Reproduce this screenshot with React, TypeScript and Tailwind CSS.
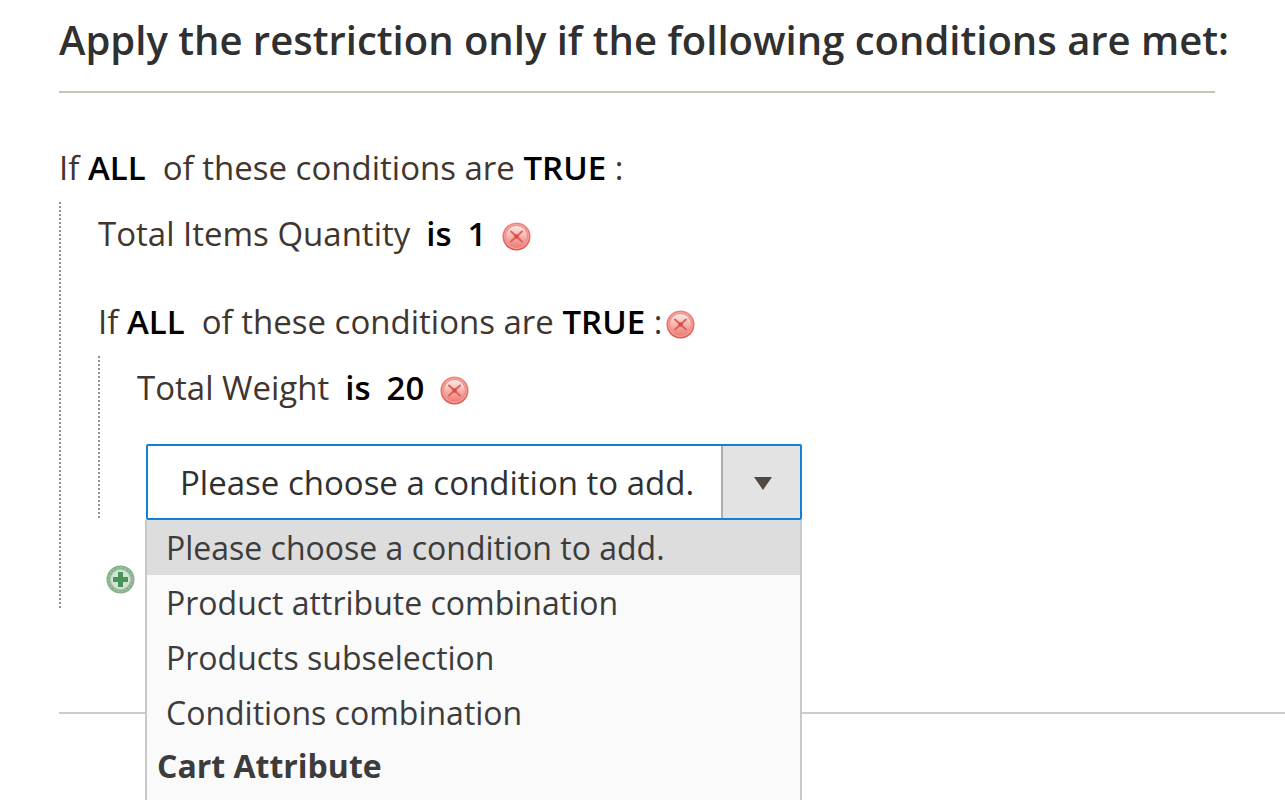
import { useState } from "react";
import type { ReactNode } from "react";

const choices = [
  "Please choose a condition to add.",
  "Product attribute combination",
  "Products subselection",
  "Conditions combination",
];

function RemoveIcon() {
  return (
    <svg viewBox="0 0 29 29" className="size-[29px]" aria-hidden="true">
      <defs>
        <linearGradient id="remove-fill" x1="0" y1="0" x2="0" y2="1">
          <stop offset="0" stopColor="#fdeeea" />
          <stop offset="0.5" stopColor="#f5b5b0" />
          <stop offset="1" stopColor="#ee7b74" />
        </linearGradient>
        <linearGradient id="remove-ring" x1="0" y1="0" x2="0" y2="1">
          <stop offset="0" stopColor="#f08a84" />
          <stop offset="1" stopColor="#e5524c" />
        </linearGradient>
      </defs>
      <circle cx="14.5" cy="14.5" r="14" fill="url(#remove-ring)" />
      <circle cx="14.5" cy="14.5" r="12.4" fill="#f4a7a2" />
      <circle cx="14.5" cy="14.5" r="11" fill="url(#remove-fill)" stroke="#ee8680" strokeWidth="1" />
      <path d="M9 9.500l11 10M20 9.500l-11 10" stroke="#e4605a" strokeWidth="2" strokeLinecap="round" />
      <circle cx="14.5" cy="14.5" r="2.2" fill="#df4b45" />
    </svg>
  );
}

function AddIcon() {
  return (
    <svg viewBox="0 0 29 29" className="size-[29px]" aria-hidden="true">
      <circle cx="14.5" cy="14.5" r="14" fill="#86b18a" />
      <circle cx="14.5" cy="14.5" r="12" fill="none" stroke="#a4c5a6" strokeWidth="1.500" strokeDasharray="2 2" />
      <circle cx="14.5" cy="14.5" r="10" fill="#d5e2d4" stroke="#b4cfb5" strokeWidth="1" />
      <path d="M12 7h5v5h5v5h-5v5h-5v-5H7v-5h5z" fill="#479659" />
    </svg>
  );
}

function IconButton({ label, children }: { label: string; children: ReactNode }) {
  return (
    <button type="button" aria-label={label} className="block shrink-0 cursor-pointer">
      {children}
    </button>
  );
}

function Param({ children }: { children: ReactNode }) {
  return (
    <a href="#edit" className="font-semibold text-black">
      {children}
    </a>
  );
}

function Group({ children, className }: { children: ReactNode; className: string }) {
  return (
    <ul
      className={
        "mt-3 bg-[repeating-linear-gradient(to_bottom,#929292_0_2px,transparent_2px_4px)] bg-[length:2px_100%] bg-no-repeat pl-[39px] pt-[10px] " +
        className
      }
    >
      {children}
    </ul>
  );
}

function Combination({ removable = false }: { removable?: boolean }) {
  return (
    <div className="flex items-center gap-1">
      <p className="whitespace-pre">
        If <Param>ALL</Param>
        {"  of these conditions are "}
        <Param>TRUE</Param>
        {" :"}
      </p>
      {removable && (
        <span className="mt-1">
          <IconButton label="Remove combination">
            <RemoveIcon />
          </IconButton>
        </span>
      )}
    </div>
  );
}

function Condition({ name, value }: { name: string; value: string }) {
  return (
    <li className="flex items-center gap-4">
      <span>{name}</span>
      <Param>is</Param>
      <Param>{value}</Param>
      <span className="mt-1">
        <IconButton label={"Remove " + name}>
          <RemoveIcon />
        </IconButton>
      </span>
    </li>
  );
}

function ConditionPicker() {
  const [value, setValue] = useState(choices[0]);
  return (
    <div className="relative ml-[9px] mt-[34px] w-[656px]">
      <div className="relative">
        <select
          aria-label="Condition to add"
          value={value}
          onChange={(e) => setValue(e.target.value)}
          className="block h-[76px] w-full appearance-none rounded-[2px] border-2 border-[#1080d8] bg-white pl-8 pr-24 pt-[2px] text-[#303030] outline-none"
        >
          {choices.map((c) => (
            <option key={c}>{c}</option>
          ))}
        </select>
        <span className="pointer-events-none absolute bottom-[2px] right-[2px] top-[2px] flex w-[79px] items-center justify-center border-l-2 border-[#adadad] bg-[#e3e3e3] pl-[3px] pt-[2px]">
          <svg viewBox="0 0 18 13" className="h-[13px] w-[18px]" aria-hidden="true">
            <path d="M0 0h18L9 13z" fill="#514943" />
          </svg>
        </span>
      </div>
      <div
        role="listbox"
        aria-label="Conditions"
        className="absolute -left-px right-0 top-full h-[300px] border-x-2 border-[#c8c8c8] bg-[#fafafa] text-[32px] text-[#3c3c3c]"
      >
        {choices.map((c) => (
          <button
            key={c}
            type="button"
            role="option"
            aria-selected={c === value}
            onClick={() => setValue(c)}
            className="block h-[55px] w-full pl-[19px] text-left leading-[55px] aria-selected:bg-[#dddddd]"
          >
            {c}
          </button>
        ))}
        <p className="pl-[10px] font-bold leading-[51px]">Cart Attribute</p>
      </div>
    </div>
  );
}

export default function App() {
  return (
    <main className="h-screen overflow-hidden bg-white pl-[59px] pt-3 font-['Open_Sans',sans-serif] text-[33px] leading-[44px] text-[#41362f]">
      <h1 className="mr-[70px] whitespace-nowrap border-b-2 border-[#cac3b4] pb-[23px] text-[40px] font-semibold leading-[56px] text-[#303030]">
        Apply the restriction only if the following conditions are met:
      </h1>
      <section className="mt-[53px]">
        <Combination />
        <Group className="pb-[15px]">
          <Condition name="Total Items Quantity" value="1" />
          <li className="mt-[44px]">
            <Combination removable />
            <Group className="">
              <Condition name="Total Weight" value="20" />
              <li>
                <ConditionPicker />
              </li>
            </Group>
          </li>
          <li className="ml-2 mt-[45px]">
            <IconButton label="Add condition">
              <AddIcon />
            </IconButton>
          </li>
        </Group>
      </section>
      <hr className="mt-[103px] border-t-2 border-[#cccccc]" />
    </main>
  );
}
